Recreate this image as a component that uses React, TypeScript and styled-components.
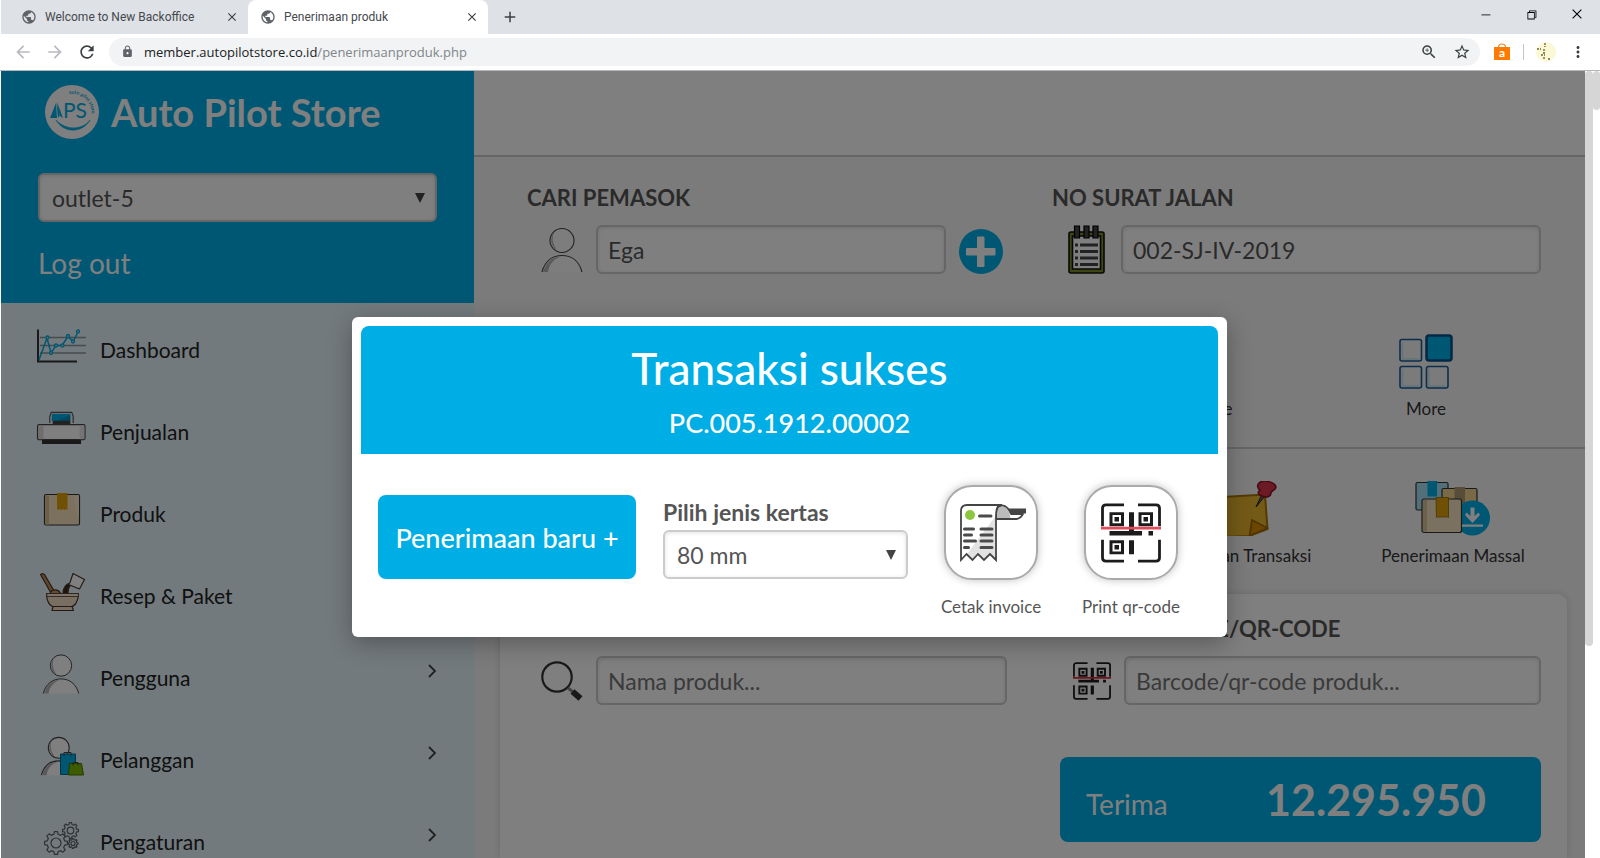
import React from "react";
import styled, { createGlobalStyle } from "styled-components";
import {
  MdPublic,
  MdClose,
  MdAdd,
  MdArrowBack,
  MdArrowForward,
  MdRefresh,
  MdLock,
  MdZoomIn,
  MdStarBorder,
  MdMoreVert,
} from "react-icons/md";
import { VscChromeMinimize, VscChromeRestore, VscChromeClose } from "react-icons/vsc";

const brand = "#00aee6";
const appFont = `Lato, "Open Sans", sans-serif`;
const uiFont = `"Open Sans", "Noto Sans", sans-serif`;

const GlobalStyle = createGlobalStyle`
  *, *::before, *::after { box-sizing: border-box; }
  body { margin: 0; background: #fff; font-family: ${appFont}; color: #555; }
  button, input, select { font: inherit; color: inherit; }
  button { cursor: pointer; border: 0; background: none; padding: 0; }
  svg { display: block; flex: none; }
`;

/* ---------- browser frame ---------- */

const Window = styled.div`
  height: 100vh;
  display: flex;
  flex-direction: column;
  overflow: hidden;
`;

const TabStrip = styled.div`
  height: 34px;
  flex: none;
  display: flex;
  background: #dee1e6;
  margin-left: 1px;
  font: 12px/16px Roboto, ${uiFont};
  color: #45494d;
`;

const Tab = styled.div<{ $active?: boolean }>`
  width: ${(p) => (p.$active ? 240 : 247)}px;
  display: flex;
  align-items: center;
  gap: 8px;
  padding: 0 8px 0 ${(p) => (p.$active ? 12 : 20)}px;
  background: ${(p) => (p.$active ? "#fff" : "transparent")};
  border-radius: 8px 8px 0 0;
  color: #45494d;
  svg { color: #5f6368; }
`;

const TabTitle = styled.span`
  flex: 1;
  white-space: nowrap;
`;

const IconButton = styled.button<{ $w?: number; $dim?: boolean }>`
  width: ${(p) => p.$w ?? 16}px;
  display: flex;
  align-items: center;
  justify-content: center;
  color: ${(p) => (p.$dim ? "#b8babd" : "#3c4043")};
  && svg { color: inherit; }
`;

const WindowButtons = styled.div`
  margin-left: auto;
  display: flex;
  height: 28px;
  button { color: #000; }
`;

const Toolbar = styled.div`
  height: 37px;
  flex: none;
  display: flex;
  align-items: center;
  padding: 0 0 1px 7px;
  border-bottom: 1px solid #b5b7ba;
`;

const Omnibox = styled.div`
  flex: 1;
  height: 28px;
  margin: 0 6px;
  padding: 0 2px 0 12px;
  border-radius: 14px;
  background: #f1f3f4;
  display: flex;
  align-items: center;
  gap: 10px;
  color: #5f6368;
`;

const Address = styled.div`
  flex: 1;
  font: 13px/20px ${uiFont};
  color: #80868b;
  white-space: nowrap;
  b { font-weight: 400; color: #202124; }
`;

const Separator = styled.span`
  width: 1px;
  height: 16px;
  margin: 0 12px 0 5px;
  background: #c4c7ca;
`;

/* ---------- page ---------- */

const Viewport = styled.div`
  flex: 1;
  min-height: 0;
  display: flex;
  padding-left: 1px;
`;

const Page = styled.div`
  position: relative;
  flex: 1;
  min-width: 0;
  display: flex;
  overflow: hidden;
  background: #f7f7f7;
`;

const Track = styled.div<{ $w: number }>`
  width: ${(p) => p.$w}px;
  flex: none;
`;

const Thumb = styled.div<{ $h: number }>`
  height: ${(p) => p.$h}%;
  border-radius: 4px;
  background: #d6d6d6;
`;

const Sidebar = styled.aside`
  width: 473px;
  flex: none;
  background: #e6f5fb;
`;

const SidebarHead = styled.div`
  padding: 14px 37px 22px;
  background: ${brand};
  color: #fff;
`;

const Brand = styled.div`
  display: flex;
  align-items: center;
  gap: 12px;
  margin: 0 0 34px 7px;
  font: 700 38px/54px ${appFont};
  white-space: nowrap;
`;

const LogOut = styled.a`
  display: block;
  margin-top: 23px;
  font-size: 28px;
  line-height: 36px;
  color: #fff;
  text-decoration: none;
`;

const Nav = styled.nav`
  padding-top: 2px;
`;

const NavItem = styled.a`
  height: 82px;
  padding: 0 37px 0 35px;
  display: flex;
  align-items: center;
  gap: 14px;
  color: #222;
  font-size: 21px;
  line-height: 28px;
  text-decoration: none;
`;

const NavText = styled.span`
  flex: 1;
  padding-top: 8px;
`;

const NavArrow = styled.span`
  padding-bottom: 6px;
`;

const Main = styled.main`
  flex: 1;
  min-width: 0;
  display: flex;
  flex-direction: column;
`;

const TopBar = styled.header`
  height: 86px;
  flex: none;
  background: #fff;
  border-bottom: 2px solid #ccc;
`;

const FormRow = styled.div`
  display: grid;
  grid-template-columns: 480fr 489fr;
  column-gap: 45px;
  padding: 26px 44px 0 53px;
`;

const CardRow = styled(FormRow)`
  grid-template-columns: 480fr 481fr;
  column-gap: 53px;
  padding: 0;
`;

const FieldLabel = styled.label`
  display: block;
  margin-bottom: 12px;
  font-size: 22px;
  line-height: 30px;
  font-weight: 700;
  white-space: nowrap;
`;

const FieldLine = styled.div`
  display: flex;
  align-items: center;
`;

const IconSlot = styled.span<{ $w?: number }>`
  width: ${(p) => p.$w ?? 69}px;
  flex: none;
  display: flex;
  justify-content: center;
`;

const TextInput = styled.input`
  flex: 1;
  min-width: 0;
  height: 49px;
  padding: 0 10px;
  border: 2px solid #ccc;
  border-radius: 6px;
  background: #fff;
  box-shadow: inset 0 1px 4px rgba(0, 0, 0, 0.12);
  font-size: 23px;
  outline: 0;
  &::placeholder { color: #757575; opacity: 1; }
`;

const AddButton = styled.button`
  align-self: flex-end;
  margin: 0 4px 0 13px;
`;

const Shortcuts = styled.div<{ $top: number; $right: number; $line?: boolean }>`
  display: flex;
  justify-content: flex-end;
  padding: ${(p) => p.$top}px ${(p) => p.$right}px 26px 0;
  border-bottom: ${(p) => (p.$line ? "2px solid #ccc" : "0")};
`;

const Shortcut = styled.button<{ $w?: number }>`
  width: ${(p) => p.$w ?? 214}px;
  display: flex;
  flex-direction: column;
  align-items: center;
  justify-content: flex-end;
  gap: 8px;
  color: #333;
  font-size: 17px;
  line-height: 24px;
`;

const Card = styled.section`
  flex: 1;
  margin: 0 18px 0 26px;
  padding: 20px 26px 0 27px;
  border-radius: 10px 10px 0 0;
  background: #fff;
  box-shadow: 0 0 8px rgba(0, 0, 0, 0.14);
`;

const Receive = styled.button`
  grid-column: 2;
  margin-top: 52px;
  height: 85px;
  padding: 0 55px 0 26px;
  display: flex;
  align-items: center;
  justify-content: space-between;
  border-radius: 8px;
  background: ${brand};
  color: #fff;
  font-size: 28px;
  line-height: 36px;
  span { padding-top: 8px; }
  strong { font-size: 43px; }
`;

/* ---------- select ---------- */

const SelectBox = styled.div`
  display: grid;
  align-items: center;
  color: #555;
  svg { grid-area: 1 / 1; justify-self: end; margin-right: 12px; pointer-events: none; }
`;

const NativeSelect = styled.select`
  grid-area: 1 / 1;
  width: 100%;
  height: 49px;
  padding: 0 12px;
  border: 2px solid #ccc;
  border-radius: 6px;
  background: #fff;
  box-shadow: inset 0 1px 4px rgba(0, 0, 0, 0.12);
  font-size: 23px;
  appearance: none;
`;

function Select({ id, value, label }: { id: string; value: string; label?: string }) {
  return (
    <SelectBox>
      <NativeSelect id={id} aria-label={label} defaultValue={value}>
        <option>{value}</option>
      </NativeSelect>
      <svg width="10" height="10" viewBox="0 0 10 10">
        <path d="M0 0h10L5 10z" fill="#444" />
      </svg>
    </SelectBox>
  );
}

/* ---------- dialog ---------- */

const Backdrop = styled.div`
  position: absolute;
  inset: 0;
  display: flex;
  justify-content: center;
  align-items: flex-start;
  padding: 246px 7px 0 0;
  background: rgba(0, 0, 0, 0.5);
`;

const Dialog = styled.div`
  width: 875px;
  padding: 9px 9px 18px;
  border-radius: 6px;
  background: #fff;
  box-shadow: 0 6px 24px rgba(0, 0, 0, 0.3);
`;

const DialogHead = styled.div`
  padding: 14px 0 11px;
  border-radius: 8px 8px 0 0;
  background: ${brand};
  color: #fff;
  text-align: center;
`;

const DialogTitle = styled.h1`
  margin: 0;
  font-size: 44px;
  line-height: 56px;
  font-weight: 500;
`;

const DialogCode = styled.p`
  margin: 7px 0 0;
  font-size: 27px;
  line-height: 40px;
  font-weight: 500;
`;

const DialogBody = styled.div`
  display: flex;
  align-items: flex-start;
  padding: 31px 17px 0;
`;

const NewButton = styled.button`
  width: 258px;
  height: 84px;
  margin: 10px 27px 0 0;
  border-radius: 8px;
  background: ${brand};
  color: #fff;
  font-size: 27px;
  font-weight: 500;
  white-space: nowrap;
`;

const PaperField = styled.div`
  width: 245px;
  margin: 12px 13px 0 0;
  label {
    display: block;
    margin-bottom: 3px;
    font-size: 23px;
    line-height: 30px;
    font-weight: 700;
  }
`;

const PrintButton = styled.button`
  width: 140px;
  display: flex;
  flex-direction: column;
  align-items: center;
  gap: 15px;
  font-size: 17px;
  line-height: 24px;
  color: #555;
`;

const PrintTile = styled.span`
  width: 94px;
  height: 95px;
  display: flex;
  align-items: center;
  justify-content: center;
  border: 2px solid #aaa;
  border-radius: 28px;
  box-shadow: 0 0 8px rgba(0, 0, 0, 0.25);
`;

/* ---------- drawings ---------- */

const Logo = () => (
  <svg width="54" height="54" viewBox="0 0 54 54">
    <defs>
      <path id="logo-arc" d="M24 9A19.500 19.500 0 0 1 46 33" />
    </defs>
    <circle cx="27" cy="27" r="27" fill="#fff" />
    <path d="M5 33 11 18l1 15zM11.500 17 13 33l2-3zM12 17l6 16-3-2z" fill={brand} />
    <text x="18" y="33" fontFamily="Lato, sans-serif" fontSize="21" fontWeight="400" fill={brand}>PS</text>
    <text fontFamily="Lato, sans-serif" fontSize="5" fontWeight="700" fill={brand}>
      <textPath href="#logo-arc">auto pilot store</textPath>
    </text>
    <path d="M11 35c7 13 26 14 34 0-7 10-24 11-34 0z" fill={brand} stroke={brand} strokeWidth=".6" />
  </svg>
);

const ChartIcon = () => (
  <svg width="50" height="40" viewBox="0 0 50 40" fill="none">
    <path d="M4 11.500h46M4 19.500h46M4 27h46" stroke="#8d979b" strokeWidth="1.500" />
    <path d="M2 3.500v32h39" stroke="#333" strokeWidth="2" />
    <path d="m3 34 8-22 4 15 5-7.500h6l6-9 5 5 5-9.500" stroke={brand} strokeWidth="1.500" />
    <g stroke={brand} strokeWidth="1.300" fill="#bfe8f5">
      <circle cx="11.500" cy="11.500" r="1.500" />
      <circle cx="15" cy="27" r="1.500" />
      <circle cx="20" cy="19.500" r="1.500" />
      <circle cx="26.500" cy="19.500" r="1.500" />
      <circle cx="32" cy="10" r="1.500" />
      <circle cx="37" cy="15.500" r="1.500" />
      <circle cx="42" cy="5.500" r="1.500" />
    </g>
  </svg>
);

const PrinterIcon = () => (
  <svg width="50" height="40" viewBox="-.5 -.5 51 41">
    <path d="M13.500 15V8l1.500-4h21l1.500 4v7" fill="#f4f4f4" stroke="#555" strokeWidth="1.200" />
    <path d="M15.500 5.500h19V13h-19z" fill={brand} />
    <path d="m20 13 14.500-6v6z" fill="#0090c4" />
    <path d="M16.500 12.500h18V17h-18z" fill="#444" />
    <path d="M5.500 31h40v5.500h-40z" fill="#333" />
    <rect x="1" y="16.500" width="48.500" height="15.500" rx="1.500" fill="#fff" stroke="#444" strokeWidth="1.300" />
    <path d="M2 17.500h5v14H2z" fill="#ddd" />
    <path d="M44 17.500h5v14h-5z" fill="#e8e8e8" />
  </svg>
);

const BoxIcon = () => (
  <svg width="50" height="40" viewBox="-1 0 50 40">
    <rect x="7.500" y="4.500" width="35" height="30.500" rx="1.500" fill="#f6e3bd" stroke="#333" strokeWidth="1.200" />
    <path d="M8.500 5.500H12v29H8.500z" fill="#d9bf90" />
    <path d="M36 5.500h6V30z" fill="#fbedd0" />
    <path d="M20 3h10.500v17l-1.500-1-1.500 1-1.500-1-1.500 1-1.500-1-1.500 1-1.500-1z" fill="#e0a008" />
  </svg>
);

const MortarIcon = () => (
  <svg width="50" height="40" viewBox="0 0 50 40" stroke="#4a3628" strokeWidth="1.200" strokeLinejoin="round">
    <path d="m4.500 2.500 2-1 2 1 10 17-3 2.500z" fill="#c08a5a" />
    <path d="M14 22c1-5 8-6 11 0z" fill="#c79763" />
    <path d="M27 22c0-6 3-10 7-11l1 2c-3 2-3 5-3 9z" fill="#3d2a22" />
    <path d="m37 1.500 11.500 6-5 9.500-11-4.500 1.500-2z" fill="#fff" />
    <path d="M10.500 21.500h32c0 8-4 13-8 13.500h-16c-5-.5-8-6-8-13.500z" fill="#f0dcc2" />
    <path d="M10.500 21.500h32v3h-31.500z" fill="#f8e8d2" strokeWidth=".8" />
    <path d="M17 34.500h19l1.500 4H16z" fill="#f0dcc2" />
  </svg>
);

const Person = () => (
  <>
    <circle cx="21" cy="13" r="12" />
    <path d="M13 5c-5 6-3 14 3 18-3-5-6-10-3-18z" fill="#b5b5b5" stroke="none" />
    <path d="M1 44.500C4 33 12 28 21 28s17 5 20 16.500" />
    <path d="M2 44.500C5 34 12 29 20 29c-7 2-12 8-13 15.500z" fill="#b5b5b5" stroke="none" />
  </>
);

const UserIcon = ({ w = 42, h = 46, fill = "#fff" }: { w?: number; h?: number; fill?: string }) => (
  <svg width={w} height={h} viewBox="0 0 42 45" fill={fill} stroke="#444" strokeWidth="1.100">
    <Person />
  </svg>
);

const CustomerIcon = () => (
  <svg width="50" height="40" viewBox="0 0 50 40">
    <g transform="translate(4.500 .5) scale(.87)" fill="#fff" stroke="#444" strokeWidth="1.200">
      <Person />
    </g>
    <path d="M24.500 18h15v20.500h-15z" fill={brand} stroke="#0a6a8a" strokeWidth="1" />
    <path d="M28 20v-3.500h7V20" fill="none" stroke="#444" strokeWidth="1" />
    <path d="M33.500 27.500h12l2 11.500H32.500z" fill="#7ab800" stroke="#4b7500" strokeWidth="1" />
    <path d="M37 29.500v-3h5v3" fill="none" stroke="#444" strokeWidth="1" />
  </svg>
);

function gearPath(cx: number, cy: number, r: number, teeth = 8) {
  const inner = r * 0.78;
  const step = (Math.PI * 2) / teeth;
  const at = (radius: number, a: number) =>
    `${(cx + radius * Math.cos(a)).toFixed(2)} ${(cy + radius * Math.sin(a)).toFixed(2)}`;
  let d = "";
  for (let i = 0; i < teeth; i++) {
    const a = i * step;
    d += `${i ? "L" : "M"}${at(inner, a - step * 0.3)}L${at(r, a - step * 0.18)}L${at(r, a + step * 0.18)}L${at(inner, a + step * 0.3)}`;
  }
  return d + "Z";
}

const GearsIcon = () => (
  <svg width="50" height="40" viewBox="0 0 50 40" fill="none" stroke="#5d6266" strokeWidth="1.200" strokeLinejoin="round">
    <path d={gearPath(20, 25, 11.500)} />
    <circle cx="20" cy="25" r="5" />
    <path d={gearPath(34.500, 12.500, 8)} />
    <circle cx="34.500" cy="12.500" r="3.300" />
    <path d={gearPath(37, 25.500, 5)} />
    <circle cx="37" cy="25.500" r="2" />
  </svg>
);

const ChevronIcon = () => (
  <svg width="10" height="14" viewBox="0 0 10 14" fill="none" stroke="#444" strokeWidth="1.800">
    <path d="m2 1 6 6-6 6" />
  </svg>
);

const PlusIcon = () => (
  <svg width="44" height="45" viewBox="0 0 44 45">
    <ellipse cx="22" cy="22.500" rx="22" ry="22.500" fill={brand} />
    <path d="M18 8.500q0-1 1-1h5.500q1 0 1 1V19h10q1 0 1 1v5.500q0 1-1 1h-10V37q0 1-1 1H19q-1 0-1-1V26.500H8q-1 0-1-1V20q0-1 1-1h10z" fill="#fff" />
  </svg>
);

const NotepadIcon = () => (
  <svg width="37" height="49" viewBox="0 0 37 49">
    <rect x="1" y="7" width="35" height="41" rx="2" fill="#7d8c22" stroke="#111" strokeWidth="1.600" />
    <path d="M4.500 11h28v33h-28z" fill="#fff" stroke="#111" strokeWidth="1.600" />
    <path d="M6.500 1h5v12h-5zM16 1h5v12h-5zM25 1h5v12h-5z" fill="#444" stroke="#000" strokeWidth="1.200" />
    <path d="M12 20h18M12 26.500h18M12 33h18M12 39.500h18" stroke="#444" strokeWidth="2.800" />
    <path d="M7 20h3M7 26.500h3M7 33h3M7 39.500h3" stroke="#444" strokeWidth="2.800" />
  </svg>
);

const MoreIcon = () => (
  <svg width="54" height="55" viewBox="0 0 54 55" fill="#f7f7f7" stroke="#1a5a98" strokeWidth="1.600">
    <rect x="1" y="5.500" width="21.500" height="21.500" rx="2" />
    <rect x="1" y="32.500" width="21.500" height="21.500" rx="2" />
    <rect x="27.500" y="32.500" width="21.500" height="21.500" rx="2" />
    <path d="M3.500 8v17H20M3.500 35v17H20M30 35v17h16.500" fill="none" stroke="#c3e6f2" strokeWidth="1.500" />
    <rect x="27.500" y="1.500" width="25" height="25" rx="2.500" fill={brand} stroke="#075089" strokeWidth="2.500" />
  </svg>
);

const NoteIcon = () => (
  <svg width="76" height="55" viewBox="0 0 76 55">
    <path d="m4 17 60-3.500 2.500 34.500L48 55l-43 1.500z" fill="#e9b52e" stroke="#a87400" strokeWidth="2" />
    <path d="m51 39 15.500 8L48.500 55z" fill="#d88a00" stroke="#a06a00" strokeWidth="1.800" strokeLinejoin="round" />
    <path d="m61 13-6 13 9-11z" fill="#666" stroke="#222" strokeWidth="1" />
    <path d="M58 2c4-4 16-1 17 4 0 4-5 3-5 6 0 4-5 5-9 3-4-1-5-4-2-6-3-2-3-5-1-7z" fill="#d8354b" stroke="#8c0f25" strokeWidth="1.500" />
  </svg>
);

const MassIcon = () => (
  <svg width="76" height="55" viewBox="0 0 76 55" strokeWidth="1.200">
    <rect x="1" y="1.500" width="32" height="27.500" rx="1.500" fill="#a6dff3" stroke="#333" />
    <path d="M12.500 0H22v15.500h-9.500z" fill={brand} />
    <rect x="27" y="7.500" width="35" height="28" rx="1.500" fill="#f3d48e" stroke="#333" />
    <path d="M39.500 6H50v16H39.500z" fill="#b19a72" />
    <circle cx="57.500" cy="37" r="17.500" fill={brand} />
    <rect x="7" y="18" width="39.500" height="33.500" rx="2" fill="#f6e3c0" stroke="#333" />
    <path d="M8 19h4v31.500H8z" fill="#d9c39a" />
    <path d="M21 16.500h12.500v20l-1.500-1-1.500 1-1.500-1-1.500 1-1.500-1-1.500 1-1.500-1-1.500 1z" fill="#e0a008" stroke="#8c6a10" strokeWidth=".8" />
    <path d="M55.500 26.500h4V35l4-3.500 1.500 2.500-7.500 8-7.500-8 1.500-2.500 4 3.500zM47 43.500h21v2.300H47z" fill="#fff" />
  </svg>
);

const SearchIcon = () => (
  <svg width="42" height="40" viewBox="0 0 42 40" fill="none">
    <circle cx="16" cy="16" r="14.700" stroke="#333" strokeWidth="2.200" />
    <path d="m27 27 5 4" stroke="#888" strokeWidth="3" />
    <path d="m31.500 30.500 8 7" stroke="#333" strokeWidth="6" />
  </svg>
);

const QrIcon = ({ size = 60, line = "#e34b5c" }: { size?: number; line?: string }) => (
  <svg width={size} height={size} viewBox="0 0 60 62" preserveAspectRatio="none" fill="none">
    <path d="M23 2H5Q1.500 2 1.500 5.500V24M37 2h18q3.500 0 3.500 3.500V24M1.500 38v18.500Q1.500 60 5 60h18M58.500 38v18.500q0 3.500-3.500 3.500H37" stroke="#1c1c1c" strokeWidth="2.800" />
    <path d="M10 11h11.500v11.500H10zM39 11h11.500v11.500H39zM10 40h11.500v11.500H10z" stroke="#1c1c1c" strokeWidth="3" />
    <path d="M13.500 14.500h4.500V19h-4.500zM42.500 14.500H47V19h-4.500zM13.500 43.500H18V48h-4.500zM28 9.500h5V29h8v4.500H8.500V29H28zM47.500 29h4.500v4.500h-4.500zM28 38.500h5V53h-5z" fill="#1c1c1c" />
    <path d="M0 26h60" stroke={line} strokeWidth="3" />
  </svg>
);

const InvoiceIcon = () => (
  <svg width="70" height="60" viewBox="-3 0 70 60" fill="none">
    <path d="M44 5.500h23v5H48z" fill="#444" />
    <path d="M37 16c0-9 1-13.500 6-13.500s7 4.500 9 8.500h12c-2 3.500-4 5-7 5z" fill="#fff" stroke="#444" strokeWidth="1.800" strokeLinejoin="round" />
    <path d="M38 15c0-9 1-11.500 5-11.500s6 4 7.500 7l1 4.500z" fill="#bbb" />
    <path d="M2 57V8q0-6 6-6h35c-5 0-6 4-6 13v42l-6-6-6 6-6-6-5.500 6L7.500 51z" fill="#fff" />
    <path d="M36 14v42l-5-5-6 6-6-6-5.500 5L8 51z" fill="#e2e2e2" />
    <path d="M2 57V8q0-6 6-6h35c-5 0-6 4-6 13v42l-6-6-6 6-6-6-5.500 6L7.500 51z" stroke="#444" strokeWidth="1.800" />
    <circle cx="11" cy="12" r="5" fill="#8cc63f" />
    <path d="M20.500 13H32M5.500 26h9M22 26h11M5.500 32h7M22 32h11M5.500 38h11M22 38h11M5.500 44.500h4M22 44.500h11" stroke="#4a4a4a" strokeWidth="3" strokeLinecap="round" />
  </svg>
);

const BagIcon = () => (
  <svg width="16" height="18" viewBox="0 0 16 18">
    <path d="M4.500 5V3.500Q5 1 8 1t3.500 2.500V5" fill="none" stroke="#f58220" strokeWidth="1.200" />
    <path d="M0 4h16v12.500q0 .5-.5.500H.5q-.5 0-.5-.5z" fill="#ff7a00" />
    <text x="8" y="14" textAnchor="middle" fontFamily="Lato, sans-serif" fontWeight="700" fontSize="12" fill="#fff">a</text>
  </svg>
);

const Avatar = () => (
  <svg width="20" height="20" viewBox="0 0 20 20">
    <circle cx="10" cy="10" r="10" fill="#fbf8d6" />
    <path d="M9 1v4M8 7v2M1 7h4M5 13h4M8 15v3M12 17h2M7 11h2" stroke="#8f8a5a" strokeWidth="1.800" strokeDasharray="2 1" />
  </svg>
);

/* ---------- data ---------- */

const menu = [
  { name: "Dashboard", icon: <ChartIcon /> },
  { name: "Penjualan", icon: <PrinterIcon /> },
  { name: "Produk", icon: <BoxIcon /> },
  { name: "Resep & Paket", icon: <MortarIcon /> },
  { name: "Pengguna", icon: <UserIcon w={50} h={40} />, sub: true },
  { name: "Pelanggan", icon: <CustomerIcon />, sub: true },
  { name: "Pengaturan", icon: <GearsIcon />, sub: true },
];

export default function App() {
  return (
    <Window>
      <GlobalStyle />
      <TabStrip>
        <Tab>
          <MdPublic size={16} />
          <TabTitle>Welcome to New Backoffice</TabTitle>
          <IconButton aria-label="Close tab"><MdClose size={14} /></IconButton>
        </Tab>
        <Tab $active>
          <MdPublic size={16} />
          <TabTitle>Penerimaan produk</TabTitle>
          <IconButton aria-label="Close tab"><MdClose size={14} /></IconButton>
        </Tab>
        <IconButton $w={44} aria-label="New tab"><MdAdd size={18} /></IconButton>
        <WindowButtons>
          <IconButton $w={46} aria-label="Minimize"><VscChromeMinimize size={13} /></IconButton>
          <IconButton $w={46} aria-label="Restore"><VscChromeRestore size={13} /></IconButton>
          <IconButton $w={46} aria-label="Close"><VscChromeClose size={14} /></IconButton>
        </WindowButtons>
      </TabStrip>
      <Toolbar>
        <IconButton $w={32} $dim aria-label="Back"><MdArrowBack size={20} /></IconButton>
        <IconButton $w={32} $dim aria-label="Forward"><MdArrowForward size={20} /></IconButton>
        <IconButton $w={32} aria-label="Reload"><MdRefresh size={20} /></IconButton>
        <Omnibox>
          <MdLock size={13} />
          <Address><b>member.autopilotstore.co.id</b>/penerimaanproduk.php</Address>
          <IconButton $w={14} aria-label="Zoom"><MdZoomIn size={18} /></IconButton>
          <IconButton $w={32} aria-label="Bookmark"><MdStarBorder size={18} /></IconButton>
        </Omnibox>
        <IconButton $w={32} aria-label="Extension"><BagIcon /></IconButton>
        <Separator />
        <Avatar />
        <IconButton $w={44} aria-label="Menu"><MdMoreVert size={18} /></IconButton>
      </Toolbar>

      <Viewport>
        <Page>
          <Sidebar>
            <SidebarHead>
              <Brand><Logo />Auto Pilot Store</Brand>
              <Select id="outlet" value="outlet-5" label="Outlet" />
              <LogOut href="#logout">Log out</LogOut>
            </SidebarHead>
            <Nav>
              {menu.map((m) => (
                <NavItem href="#menu" key={m.name}>
                  {m.icon}
                  <NavText>{m.name}</NavText>
                  {m.sub && <NavArrow><ChevronIcon /></NavArrow>}
                </NavItem>
              ))}
            </Nav>
          </Sidebar>

          <Main>
            <TopBar />
            <FormRow>
              <div>
                <FieldLabel htmlFor="supplier">CARI PEMASOK</FieldLabel>
                <FieldLine>
                  <IconSlot><UserIcon fill="#fafafa" /></IconSlot>
                  <TextInput id="supplier" defaultValue="Ega" />
                  <AddButton aria-label="Tambah pemasok"><PlusIcon /></AddButton>
                </FieldLine>
              </div>
              <div>
                <FieldLabel htmlFor="letter">NO SURAT JALAN</FieldLabel>
                <FieldLine>
                  <IconSlot><NotepadIcon /></IconSlot>
                  <TextInput id="letter" defaultValue="002-SJ-IV-2019" />
                </FieldLine>
              </div>
            </FormRow>
            <Shortcuts $top={60} $right={49} $line>
              <Shortcut $w={220}><NotepadIcon />Invoice</Shortcut>
              <Shortcut $w={220}><MoreIcon />More</Shortcut>
            </Shortcuts>
            <Shortcuts $top={32} $right={25}>
              <Shortcut><NoteIcon />Simpanan Transaksi</Shortcut>
              <Shortcut><MassIcon />Penerimaan Massal</Shortcut>
            </Shortcuts>
            <Card>
              <CardRow>
                <div>
                  <FieldLabel htmlFor="product">CARI PRODUK</FieldLabel>
                  <FieldLine>
                    <IconSlot><SearchIcon /></IconSlot>
                    <TextInput id="product" placeholder="Nama produk..." />
                  </FieldLine>
                </div>
                <div>
                  <FieldLabel htmlFor="barcode">SCAN BARCODE/QR-CODE</FieldLabel>
                  <FieldLine>
                    <IconSlot $w={64}><QrIcon size={38} line="#e02a35" /></IconSlot>
                    <TextInput id="barcode" placeholder="Barcode/qr-code produk..." />
                  </FieldLine>
                </div>
                <Receive>
                  <span>Terima</span>
                  <strong>12.295.950</strong>
                </Receive>
              </CardRow>
            </Card>
          </Main>

          <Backdrop>
            <Dialog role="dialog" aria-labelledby="dialog-title">
              <DialogHead>
                <DialogTitle id="dialog-title">Transaksi sukses</DialogTitle>
                <DialogCode>PC.005.1912.00002</DialogCode>
              </DialogHead>
              <DialogBody>
                <NewButton>Penerimaan baru +</NewButton>
                <PaperField>
                  <label htmlFor="paper">Pilih jenis kertas</label>
                  <Select id="paper" value="80 mm" />
                </PaperField>
                <PrintButton><PrintTile><InvoiceIcon /></PrintTile>Cetak invoice</PrintButton>
                <PrintButton><PrintTile><QrIcon /></PrintTile>Print qr-code</PrintButton>
              </DialogBody>
            </Dialog>
          </Backdrop>
        </Page>
        <Track $w={8}><Thumb $h={73} /></Track>
        <Track $w={7}><Thumb $h={5} /></Track>
      </Viewport>
    </Window>
  );
}
